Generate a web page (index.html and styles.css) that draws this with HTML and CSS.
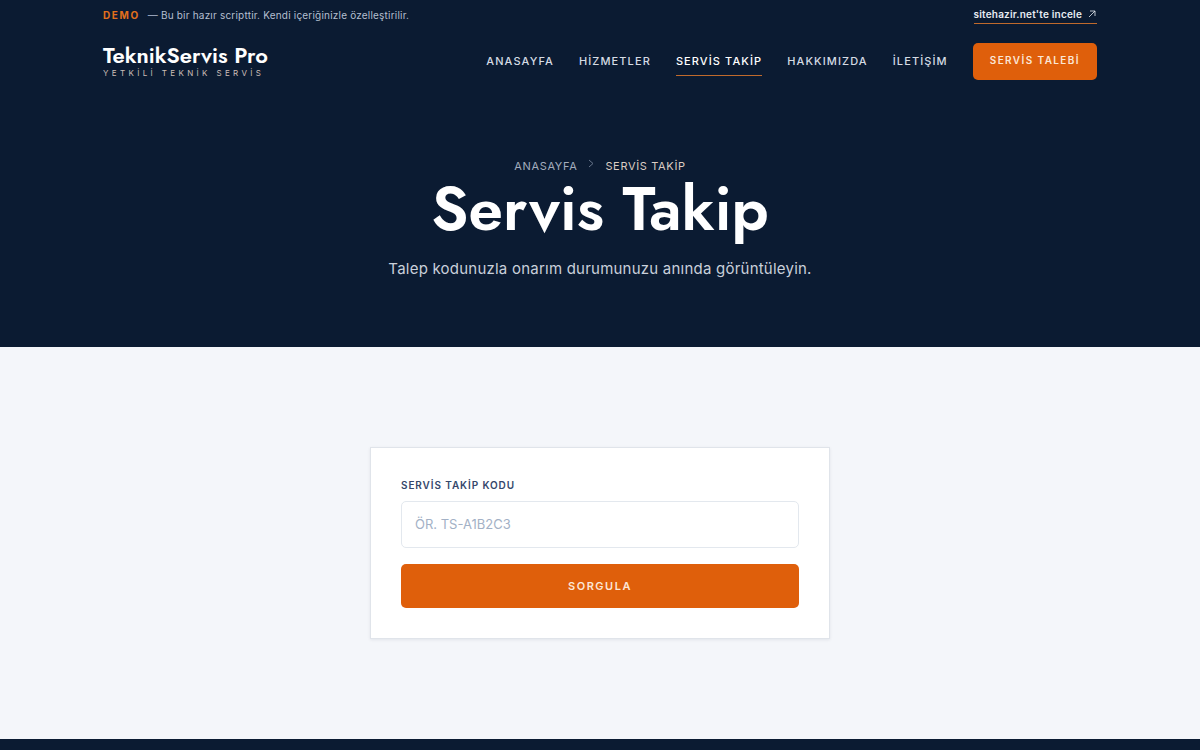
FILE: index.html
```html
<!DOCTYPE html>
<html lang="tr">
<head>
  <meta charset="UTF-8">
  <meta name="viewport" content="width=device-width, initial-scale=1.0">
  <title>Servis Takip - TeknikServis Pro</title>
  <link rel="stylesheet" href="styles.css">
</head>
<body>

  <div class="demo-bar">
    <div class="container demo-inner">
      <p class="demo-text"><strong>DEMO</strong> <span>— Bu bir hazır scripttir. Kendi içeriğinizle özelleştirilir.</span></p>
      <a class="demo-link" href="#">sitehazir.net'te incele
        <svg width="8" height="8" viewBox="0 0 8 8" fill="none" stroke="currentColor" stroke-width="0.8" aria-hidden="true"><path d="M1 7L7 1M2 1h5v5"/></svg>
      </a>
    </div>
  </div>

  <header class="site-header">
    <div class="container header-inner">
      <a class="brand" href="#">
        <span class="brand-name">TeknikServis Pro</span>
        <span class="brand-tag">YETKİLİ TEKNİK SERVİS</span>
      </a>
      <nav class="nav">
        <a href="#">ANASAYFA</a>
        <a href="#">HİZMETLER</a>
        <a class="active" href="#">SERVİS TAKİP</a>
        <a href="#">HAKKIMIZDA</a>
        <a href="#">İLETİŞİM</a>
        <a class="nav-cta" href="#">SERVİS TALEBİ</a>
      </nav>
    </div>
  </header>

  <section class="hero">
    <nav class="breadcrumb">
      <a href="#">ANASAYFA</a>
      <svg width="12" height="12" viewBox="0 0 12 12" fill="none" stroke="currentColor" aria-hidden="true"><path d="M4 2l4 3.500-4 3.500"/></svg>
      <span>SERVİS TAKİP</span>
    </nav>
    <h1>Servis Takip</h1>
    <p>Talep kodunuzla onarım durumunuzu anında görüntüleyin.</p>
  </section>

  <main class="track">
    <form class="track-card">
      <label for="code">SERVİS TAKİP KODU</label>
      <input type="text" id="code" name="code" placeholder="ÖR. TS-A1B2C3">
      <button type="submit">SORGULA</button>
    </form>
  </main>

  <footer class="site-footer"></footer>

</body>
</html>
```
FILE: styles.css
```css
* {
  box-sizing: border-box;
}
body {
  font-family: Inter, sans-serif;
  background: #f4f6fa;
  color: #0b1b32;
  margin: 0;
  min-height: 100vh;
  display: flex;
  flex-direction: column;
}
a {
  color: inherit;
  text-decoration: none;
}
.container {
  max-width: 1200px;
  margin: 0 auto;
  padding: 0 103px;
}

/* top bar */
.demo-bar {
  background: #0b1b32;
  color: #b4bfd0;
  font-size: 10px;
}
.demo-inner {
  display: flex;
  justify-content: space-between;
  align-items: center;
  height: 29px;
}
.demo-text {
  display: flex;
  gap: 8px;
  margin: 0;
  letter-spacing: 0.02em;
}
.demo-text strong {
  color: #e2701c;
  letter-spacing: 0.16em;
}
.demo-link {
  display: flex;
  align-items: center;
  gap: 6px;
  padding: 2px 1px 2px 0;
  line-height: 14px;
  letter-spacing: 0.02em;
  color: #e8ecf2;
  font-weight: 600;
  border-bottom: 1px solid #c06a2c;
}

/* header */
.site-header {
  background: #0b1b32;
}
.header-inner {
  display: flex;
  justify-content: space-between;
  align-items: center;
  height: 64px;
}
.brand {
  display: flex;
  flex-direction: column;
  padding-top: 2px;
}
.brand-name {
  font-family: Jost, sans-serif;
  font-size: 22px;
  font-weight: 600;
  line-height: 22px;
  color: #fff;
}
.brand-tag {
  font-size: 8px;
  line-height: 14px;
  letter-spacing: 0.42em;
  color: #cdbfb8;
}
.nav {
  display: flex;
  align-items: center;
  gap: 25px;
}
.nav a {
  padding: 6px 0;
  font-size: 11px;
  font-weight: 500;
  line-height: 16px;
  letter-spacing: 0.1em;
  color: #d5dbe4;
  border-bottom: 1px solid transparent;
}
.nav a.active {
  color: #fff;
  border-bottom-color: #c06a2c;
}
.nav a.nav-cta {
  padding: 9px 17px 11px;
  font-size: 10px;
  font-weight: 600;
  letter-spacing: 0.14em;
  color: #fbe6d6;
  background: #df5f0b;
  border-radius: 5px;
}

/* hero */
.hero {
  background: #0b1b32;
  padding: 65px 24px 66px;
  text-align: center;
}
.breadcrumb {
  display: flex;
  justify-content: center;
  gap: 8px;
  font-size: 11px;
  line-height: 16px;
  letter-spacing: 0.06em;
  color: #a3adbd;
}
.breadcrumb svg {
  color: #66748a;
}
.breadcrumb span {
  color: #dccdc3;
}
.hero h1 {
  margin: 0 0 13px;
  font-family: Jost, sans-serif;
  font-size: 62px;
  font-weight: 600;
  line-height: 70px;
  color: #fff;
}
.hero p {
  margin: 0;
  font-size: 15px;
  line-height: 24px;
  letter-spacing: 0.015em;
  color: #c9d0db;
}

/* tracking form */
.track {
  padding: 100px 24px;
}
.track-card {
  display: flex;
  flex-direction: column;
  max-width: 460px;
  margin: 0 auto;
  padding: 30px;
  background: #fff;
  border: 1px solid #e0e4ea;
  box-shadow: 0 1px 3px rgba(11, 27, 50, 0.08);
}
.track-card label {
  margin-bottom: 8px;
  font-size: 10px;
  font-weight: 600;
  line-height: 15px;
  letter-spacing: 0.09em;
  color: #34476b;
}
.track-card input {
  height: 47px;
  padding: 0 13px 2px;
  font-family: Inter, sans-serif;
  font-size: 13px;
  color: #0b1b32;
  background: #fff;
  border: 1px solid #e3e8ee;
  border-radius: 5px;
}
.track-card input::placeholder {
  color: #a3b1c6;
}
.track-card button {
  height: 44px;
  margin-top: 16px;
  font-family: Inter, sans-serif;
  font-size: 11px;
  font-weight: 600;
  letter-spacing: 0.14em;
  color: #fbe6d6;
  background: #df5f0b;
  border: none;
  border-radius: 5px;
}

.site-footer {
  flex: 1;
  background: #0b1b32;
}
```
